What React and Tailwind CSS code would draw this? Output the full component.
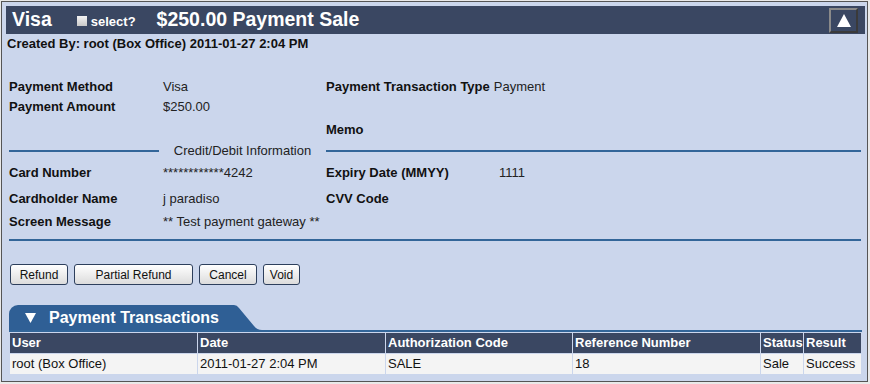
import React from "react";

const font = { fontFamily: '"Liberation Sans", Arial, sans-serif' };

const Row = ({ label, value, rightLabel, rightValue, rightLabelW = "", className = "" }) => (
  <div className={`flex h-5 items-center text-[13px] ${className}`}>
    <div className="w-[161px] pl-[7px] font-bold text-[#111]">{label}</div>
    <div className="w-[163px] text-[#222]">{value}</div>
    {rightLabel && (
      <div className="flex items-center">
        <span className={`font-bold text-[#111] ${rightLabelW}`}>{rightLabel}</span>
        {rightValue && <span className="pl-1 text-[#222]">{rightValue}</span>}
      </div>
    )}
  </div>
);

const Btn = ({ children, w }) => (
  <button
    className={`h-[21px] ${w} rounded-[3px] border border-[#2d3f5c] bg-gradient-to-b from-white to-[#dcdcdc] text-[12px] leading-none text-[#111]`}
  >
    {children}
  </button>
);

const cols = [
  { h: "User", v: "root (Box Office)", w: "w-[187px]" },
  { h: "Date", v: "2011-01-27 2:04 PM", w: "w-[187px]" },
  { h: "Authorization Code", v: "SALE", w: "w-[186px]" },
  { h: "Reference Number", v: "18", w: "w-[187px]" },
  { h: "Status", v: "Sale", w: "w-[42px]" },
  { h: "Result", v: "Success", w: "w-[57px]" },
];

export default function App() {
  return (
    <div className="h-[384px] w-[870px] bg-[#e9e9e9] pl-px pt-px" style={font}>
      <div className="flex h-[381px] w-[867px] flex-col border border-[#555] bg-[#cbd6ec]">
        {/* Header bar */}
        <div className="ml-[4px] mr-[2px] mt-[4px] flex h-[28px] items-center bg-[#3a4762] pl-[6px] pr-[7px] text-white">
          <div className="flex items-baseline">
            <span className="text-[19.5px] font-bold">Visa</span>
            <span className="ml-[25px] inline-block h-[10px] w-[10px] bg-gradient-to-b from-[#f4f4f4] to-[#c9c9c9]" />
            <span className="ml-[4px] text-[13px] font-bold">select?</span>
            <span className="ml-[21px] text-[19.5px] font-bold">$250.00 Payment Sale</span>
          </div>
          <button className="ml-auto flex h-[25px] w-[29px] items-center justify-center border-2 border-[#8a8a8a] border-r-[#3a3a3a] border-b-[#3a3a3a] bg-[#3a4762]">
            <svg width="14" height="13" viewBox="0 0 14 13">
              <path d="M7 0 L14 13 L0 13 Z" fill="#fff" />
            </svg>
          </button>
        </div>

        <div className="h-5 pl-[5px] text-[13px] font-bold leading-5 text-[#111]">
          Created By: root (Box Office) 2011-01-27 2:04 PM
        </div>

        {/* Payment fields */}
        <div className="mt-[23px]">
          <Row label="Payment Method" value="Visa" rightLabel="Payment Transaction Type" rightValue="Payment" />
          <Row label="Payment Amount" value="$250.00" />
          <Row className="mt-[3px]" label="" value="" rightLabel="Memo" />
        </div>

        {/* Credit/Debit divider */}
        <div className="mt-[3px] flex h-4 items-center pl-[7px] pr-[6px]">
          <div className="h-[2px] w-[150px] bg-[#336699]" />
          <div className="w-[167px] text-center text-[13px] text-[#222]">Credit/Debit Information</div>
          <div className="h-[2px] flex-1 bg-[#336699]" />
        </div>

        <div className="mt-[4px]">
          <Row label="Card Number" value="************4242" rightLabel="Expiry Date (MMYY)" rightLabelW="w-[169px]" rightValue="1111" />
          <Row className="mt-[6px]" label="Cardholder Name" value="j paradiso" rightLabel="CVV Code" />
          <Row className="mt-[3px]" label="Screen Message" value="** Test payment gateway **" />
        </div>

        <div className="ml-[7px] mr-[6px] mt-[7px] h-[2px] bg-[#336699]" />

        {/* Actions */}
        <div className="mt-[23px] flex gap-[6px] pl-[8px]">
          <Btn w="w-[58px]">Refund</Btn>
          <Btn w="w-[119px]">Partial Refund</Btn>
          <Btn w="w-[58px]">Cancel</Btn>
          <Btn w="w-[37px]">Void</Btn>
        </div>

        {/* Payment Transactions tab */}
        <div className="ml-[7px] mt-[20px] flex h-[25px] items-stretch">
          <div className="flex w-[223px] items-center rounded-tl-[9px] bg-[#2f5f95] pl-[16px] text-white">
            <svg width="11" height="10" viewBox="0 0 11 10">
              <path d="M0 0 L11 0 L5.5 10 Z" fill="#fff" />
            </svg>
            <span className="ml-[13px] text-[16px] font-bold">Payment Transactions</span>
          </div>
          <svg width="30" height="25" viewBox="0 0 30 25" className="block">
            <path d="M0 0 L2 0 Q5 0 7 3 L22 21 Q25 25 30 25 L0 25 Z" fill="#2f5f95" />
          </svg>
        </div>
        <div className="ml-[7px] h-[2px] w-[853px] bg-[#336699]" />

        <table className="ml-[7px] w-[853px] table-fixed border-separate border-spacing-[1px] text-left text-[13px]">
          <colgroup>
            {cols.map((c) => (
              <col key={c.h} className={c.w} />
            ))}
          </colgroup>
          <thead>
            <tr className="h-5">
              {cols.map((c) => (
                <th key={c.h} className="bg-[#3a4762] p-0 pl-[2px] font-bold text-white">
                  {c.h}
                </th>
              ))}
            </tr>
          </thead>
          <tbody>
            <tr className="h-5">
              {cols.map((c) => (
                <td key={c.h} className="bg-[#f4f4f4] p-0 pl-[2px] text-[#111]">
                  {c.v}
                </td>
              ))}
            </tr>
          </tbody>
        </table>
      </div>
    </div>
  );
}
